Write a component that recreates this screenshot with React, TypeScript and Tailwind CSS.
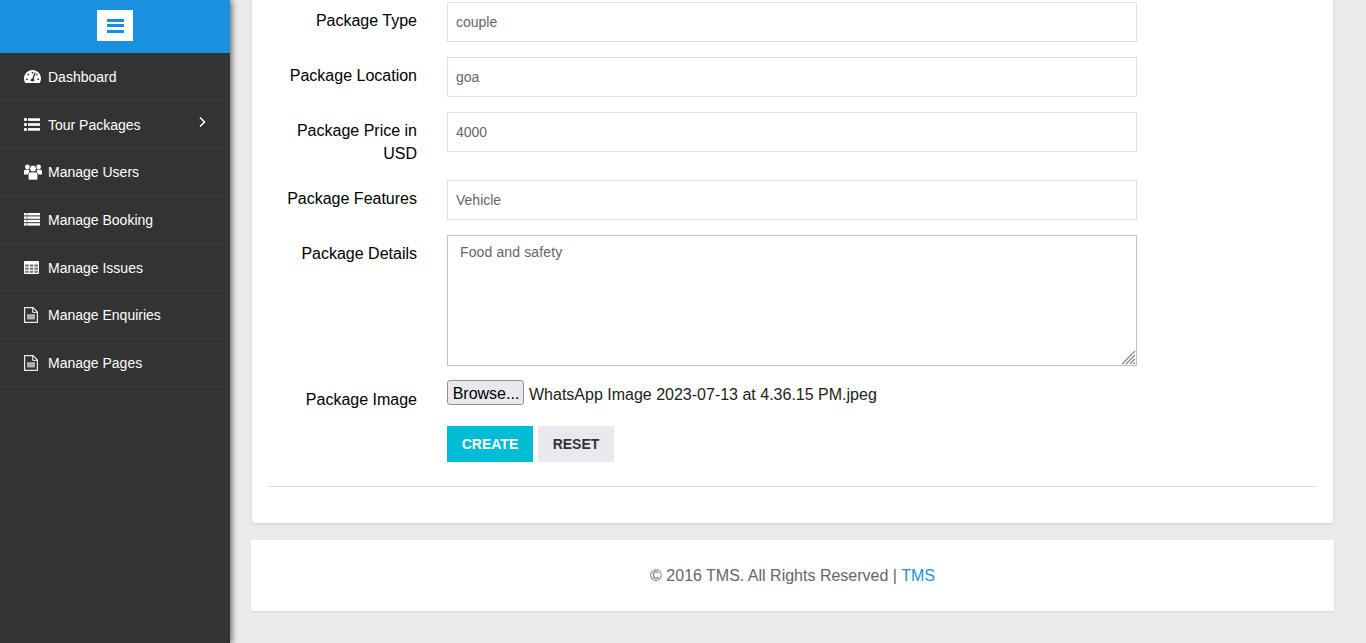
import { FaTachometerAlt } from "react-icons/fa";

const FONT = "font-['Liberation_Sans',Arial,sans-serif]";

const ListIcon = () => (
  <svg viewBox="0 0 16 13" className="w-4 h-[13px] fill-white">
    <rect x="0" y="0" width="3" height="3" rx="1" />
    <rect x="4" y="0.3" width="12" height="2.6" />
    <rect x="0" y="5" width="3" height="3" rx="1" />
    <rect x="4" y="5.2" width="12" height="2.6" />
    <rect x="0" y="10" width="3" height="3" rx="1" />
    <rect x="4" y="10.1" width="12" height="2.6" />
  </svg>
);

const RowsIcon = () => (
  <svg viewBox="0 0 16 13" className="w-4 h-[13px]">
    <g fill="#fff">
      <rect x="0" y="0" width="16" height="2.4" />
      <rect x="0" y="3.4" width="16" height="2.4" />
      <rect x="0" y="6.8" width="16" height="2.4" />
      <rect x="0" y="10.2" width="16" height="2.4" />
    </g>
    <rect x="2.6" y="0" width="0.8" height="13" fill="#777" />
  </svg>
);

const UsersIcon = () => (
  <svg viewBox="0 0 18 16" className="w-[18px] h-4">
    <g fill="#fff">
      <circle cx="3.4" cy="3" r="2.4" />
      <circle cx="14.6" cy="3" r="2.4" />
      <path d="M0 10.5V7.6C0 6.4.8 5.8 1.8 5.8h3.4v4.7z" />
      <path d="M18 10.5V7.6c0-1.2-.8-1.8-1.8-1.8h-3.4v4.7z" />
      <circle cx="9" cy="4.6" r="3.4" stroke="#333" strokeWidth="0.7" />
      <path d="M4.2 16v-5c0-1.8 1-3 2.6-3h4.4c1.6 0 2.6 1.2 2.6 3v5z" stroke="#333" strokeWidth="0.7" />
    </g>
  </svg>
);

const TableIcon = () => (
  <svg viewBox="0 0 15 13" className="w-[15px] h-[13px]">
    <rect x="0" y="0" width="15" height="13" rx="1" fill="#fff" />
    <g fill="#777">
      <rect x="1.2" y="3.4" width="3.5" height="2.2" />
      <rect x="5.8" y="3.4" width="3.5" height="2.2" />
      <rect x="10.4" y="3.4" width="3.5" height="2.2" />
      <rect x="1.2" y="6.6" width="3.5" height="2.2" />
      <rect x="5.8" y="6.6" width="3.5" height="2.2" />
      <rect x="10.4" y="6.6" width="3.5" height="2.2" />
      <rect x="1.2" y="9.8" width="3.5" height="2" />
      <rect x="5.8" y="9.8" width="3.5" height="2" />
      <rect x="10.4" y="9.8" width="3.5" height="2" />
    </g>
  </svg>
);

const FileIcon = () => (
  <svg viewBox="0 0 14 16" className="w-[14px] h-4">
    <path d="M.6.6H9L13.4 5v10.4H.6z" fill="none" stroke="#eee" strokeWidth="1.2" />
    <path d="M8.6.6V5.4H13.4" fill="none" stroke="#eee" strokeWidth="1" />
    <rect x="3" y="7" width="8" height="5.6" fill="#999" />
    <rect x="3" y="8.6" width="8" height="0.7" fill="#ddd" />
    <rect x="3" y="10.6" width="8" height="0.7" fill="#ddd" />
  </svg>
);

const MENU = [
  { label: "Dashboard", icon: <FaTachometerAlt className="w-[17px] h-[17px] text-white" /> },
  { label: "Tour Packages", icon: <ListIcon />, arrow: true },
  { label: "Manage Users", icon: <UsersIcon /> },
  { label: "Manage Booking", icon: <RowsIcon /> },
  { label: "Manage Issues", icon: <TableIcon /> },
  { label: "Manage Enquiries", icon: <FileIcon /> },
  { label: "Manage Pages", icon: <FileIcon /> },
];

const Field = ({ label, value, className }: { label: React.ReactNode; value: string; className: string }) => (
  <div className={`flex ${className}`}>
    <label className="w-[149px] shrink-0 pt-[7px] text-right text-base leading-[23px] text-black">{label}</label>
    <input
      readOnly
      value={value}
      className="ml-[30px] w-[690px] h-10 border border-[#e0e0e0] bg-white px-2 text-sm text-[#666] outline-none"
    />
  </div>
);

export default function App() {
  return (
    <div className={`flex h-[643px] overflow-hidden bg-[#ebebeb] ${FONT}`}>
      <aside className="relative z-10 w-[230px] shrink-0 bg-[#333] shadow-[2px_0_6px_rgba(0,0,0,0.55)]">
        <div className="flex h-[53px] items-center justify-center bg-[#1a90e0] pb-[2px]">
          <div className="flex h-[31px] w-9 flex-col items-center justify-center gap-[2.5px] bg-white">
            <span className="h-[3px] w-[17px] bg-[#1a90e0]" />
            <span className="h-[3px] w-[17px] bg-[#1a90e0]" />
            <span className="h-[3px] w-[17px] bg-[#1a90e0]" />
          </div>
        </div>
        <ul>
          {MENU.map((item) => (
            <li
              key={item.label}
              className="flex h-[47.67px] items-center border-b border-[#3b3b3b] pl-6 pt-[1.2px] text-sm text-white"
            >
              <span className="flex w-6 shrink-0 items-center">{item.icon}</span>
              <span>{item.label}</span>
              {item.arrow && (
                <svg viewBox="0 0 8 12" className="ml-auto mr-[24px] mb-[5px] w-2 h-3 fill-none stroke-white stroke-[1.5]">
                  <path d="M2 1.5 6.5 6 2 10.5" />
                </svg>
              )}
            </li>
          ))}
        </ul>
      </aside>

      <main className="w-[1136px] pl-[21px] pr-[32px]">
        <div className="ml-[1px] mr-[1px] h-[523px] rounded-b-[3px] bg-white px-4 pt-[2px] shadow-[0_1px_3px_rgba(0,0,0,0.12)]">
          <Field label="Package Type" value="couple" className="h-[55px]" />
          <Field label="Package Location" value="goa" className="h-[55px]" />
          <Field label={<>Package Price in<br />USD</>} value="4000" className="h-[68px]" />
          <Field label="Package Features" value="Vehicle" className="h-[55px]" />
          <div className="flex h-[146px]">
            <label className="w-[149px] shrink-0 pt-[7px] text-right text-base leading-[23px] text-black">
              Package Details
            </label>
            <div className="relative ml-[30px] h-[131px] w-[690px]">
              <textarea
                readOnly
                value="Food and safety"
                className="h-full w-full resize-none border border-[#c0c0c0] bg-white px-3 py-[6px] text-sm tracking-[0.13px] text-[#666] outline-none"
              />
              <svg viewBox="0 0 15 15" className="absolute bottom-[1px] right-[1px] w-[15px] h-[15px] stroke-[#888] stroke-[1.3]">
                <path d="M1 14 14 1M5 14 14 5M9 14 14 9M12.5 14 14 12.5" />
              </svg>
            </div>
          </div>
          <div className="flex h-[45px]">
            <label className="w-[149px] shrink-0 pt-[7px] text-right text-base leading-[23px] text-black">
              Package Image
            </label>
            <div className="ml-[30px] flex h-[25px] -mt-[1px] items-start text-base text-[#222]">
              <button className="h-[25px] w-[77px] rounded-[3px] border border-[#8f8f9d] bg-[#e9e9ed] pl-[1px] pt-[3px] text-base leading-[18px] text-black">
                Browse...
              </button>
              <span className="ml-[5px] pt-[3px]">WhatsApp Image 2023-07-13 at 4.36.15 PM.jpeg</span>
            </div>
          </div>
          <div className="ml-[179px] flex gap-[5px]">
            <button className="h-9 w-[86px] bg-[#00bcd4] text-sm font-bold text-white">CREATE</button>
            <button className="h-9 w-[76px] bg-[#e8e8ee] text-sm font-bold text-[#333]">RESET</button>
          </div>
          <hr className="mt-6 border-t border-[#ddd]" />
        </div>
        <footer className="mt-[17px] flex h-[71px] items-center justify-center bg-white text-base text-[#666] shadow-[0_1px_2px_rgba(0,0,0,0.1)]">
          <span>
            © 2016 TMS. All Rights Reserved | <a className="text-[#1a90e0]">TMS</a>
          </span>
        </footer>
      </main>
    </div>
  );
}
